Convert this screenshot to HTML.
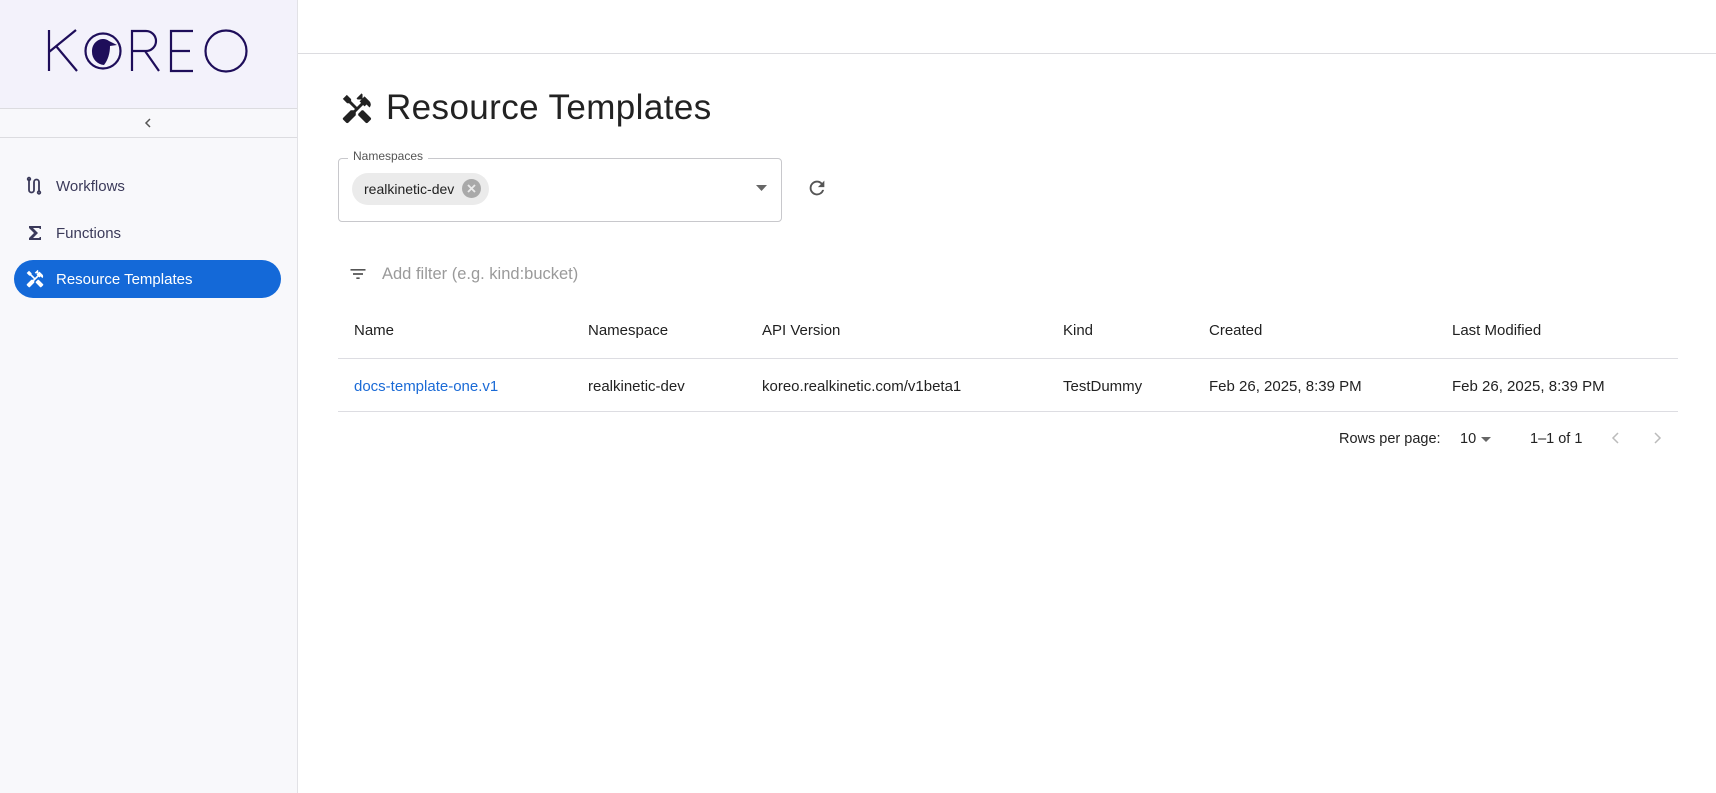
<!DOCTYPE html>
<html><head><meta charset="utf-8"><style>
*{box-sizing:border-box;margin:0;padding:0}
body{width:1716px;height:793px;overflow:hidden;font-family:"Liberation Sans",sans-serif;background:#fff;position:relative;color:#1f1f1f}
.abs{position:absolute}
#side{left:0;top:0;width:298px;height:793px;background:#f8f8fb;border-right:1px solid #e2e2e6}
#logo{left:0;top:0;width:297px;height:109px;background:#f3f2fb;border-bottom:1px solid #dcdce0}
#coll{left:0;top:109px;width:297px;height:29px;border-bottom:1px solid #dcdce0}
.nav{left:14px;width:267px;height:38px;border-radius:19px;font-size:15px;color:#3b3a5a;display:flex;align-items:center}
.nav span{position:absolute;left:42px;top:11px}
.nav svg{position:absolute;left:11px}
#hdr{left:298px;top:0;width:1418px;height:54px;border-bottom:1px solid #dcdce0}
.th,.td{position:absolute;font-size:15px}
.th{top:322px;color:#1f1f1f}
.td{top:378px;color:#222}
.line{position:absolute;left:338px;width:1340px;height:1px;background:#dddde2}
</style></head><body>
<div id="side" class="abs"></div>
<div id="logo" class="abs">
<svg class="abs" style="left:0;top:0" width="297" height="109" viewBox="0 0 297 109">
<g fill="none" stroke="#1e0e5a" stroke-width="2.2">
<path d="M49 30V71M49 52L76 30M56 46L77 71"/>
<circle cx="103" cy="51" r="17.5"/>
<path d="M132 71V31h14a10 10 0 0 1 0 20h-14M145 51l14 20"/>
<path d="M193 31h-22v40h22M171 51h19"/>
<circle cx="226" cy="51" r="20.5"/>
</g>
<path d="M92 52a11 12 0 0 1 17-11l8 4-7 1c0 7-2 14-6 19a13 13 0 0 1-12-13z" fill="#1e0e5a"/>
</svg>
</div>
<div id="coll" class="abs"><svg class="abs" style="left:142px;top:8px" width="12" height="12" viewBox="0 0 12 12"><path d="M8 2L4 6l4 4" fill="none" stroke="#555" stroke-width="1.5"/></svg></div>
<div class="nav abs" style="top:167px"><svg width="20" height="20" viewBox="0 0 20 20" fill="none" stroke="#3b3a5a" stroke-width="1.8"><path d="M4 3v11a2.5 2.5 0 0 0 5 0V6a2.5 2.5 0 0 1 5 0v9"/><circle cx="4" cy="3" r="1.3"/><circle cx="14" cy="16.5" r="1.3"/></svg><span>Workflows</span></div>
<div class="nav abs" style="top:214px"><svg width="20" height="20" viewBox="0 0 20 20"><path d="M4 3h12v3h-1.5V5H8l5 5-5 5h6.5v-1H16v3H4v-2l5-5-5-5z" fill="#3b3a5a"/></svg><span>Functions</span></div>
<div class="nav abs" style="top:260px;background:#1469d8;color:#fff"><svg width="20" height="20" viewBox="0 0 24 24"><path fill="#fff" d="m21.67 18.17-5.3-5.3h-.99l-2.54 2.54v.99l5.3 5.3c.39.39 1.02.39 1.41 0l2.12-2.12c.39-.38.39-1.02 0-1.41zM17.34 10.19l1.41-1.41 2.12 2.12a3 3 0 0 0 0-4.240l-3.54-3.54-1.41 1.41V1.71l-.7-.71-3.54 3.54.71.71h2.83l-1.41 1.41 1.06 1.06-2.89 2.89-4.13-4.13V5.06L4.83 2.04 2 4.87 5.03 7.9h1.41l4.130 4.13-.85.85H7.6l-5.3 5.3a.996.996 0 0 0 0 1.41l2.12 2.12c.39.39 1.02.39 1.41 0l5.3-5.3v-2.12l5.15-5.15 1.06 1.05z"/></svg><span>Resource Templates</span></div>
<div id="hdr" class="abs"></div>
<svg class="abs" style="left:340px;top:92px" width="34" height="34" viewBox="0 0 24 24"><path fill="#222" d="m21.67 18.17-5.3-5.3h-.99l-2.54 2.54v.99l5.3 5.3c.39.39 1.02.39 1.41 0l2.12-2.12c.39-.38.39-1.02 0-1.41zM17.34 10.19l1.41-1.41 2.12 2.12a3 3 0 0 0 0-4.24l-3.54-3.54-1.41 1.41V1.71l-.7-.71-3.54 3.54.71.71h2.83l-1.41 1.41 1.06 1.06-2.89 2.89-4.13-4.13V5.06L4.83 2.04 2 4.87 5.03 7.9h1.41l4.13 4.13-.85.85H7.6l-5.3 5.3a.996.996 0 0 0 0 1.41l2.12 2.12c.39.39 1.02.39 1.41 0l5.3-5.3v-2.12l5.15-5.15 1.06 1.05z"/></svg>
<div class="abs" style="left:386px;top:88px;font-size:35px;letter-spacing:0.4px;color:#222">Resource Templates</div>
<div class="abs" style="left:338px;top:158px;width:444px;height:64px;border:1px solid #c8c8cc;border-radius:4px"></div>
<div class="abs" style="left:348px;top:149px;padding:0 5px;background:#fff;font-size:12px;color:#555">Namespaces</div>
<div class="abs" style="left:352px;top:173px;width:137px;height:32px;border-radius:16px;background:#ebebeb;font-size:14px;color:#222;line-height:33px;padding-left:12px">realkinetic-dev
<span class="abs" style="left:110px;top:6px;width:19px;height:19px;border-radius:10px;background:#a9a9a9"></span>
<svg class="abs" style="left:114px;top:10px" width="11" height="11"><path d="M2 2l7 7M9 2l-7 7" stroke="#ebebeb" stroke-width="1.8"/></svg></div>
<svg class="abs" style="left:756px;top:185px" width="12" height="7"><path d="M0 0h11L5.5 6z" fill="#666"/></svg>
<svg class="abs" style="left:806px;top:177px" width="22" height="22" viewBox="0 0 24 24"><path fill="#555" d="M17.65 6.35A7.96 7.96 0 0 0 12 4a8 8 0 1 0 7.73 10h-2.08A6 6 0 1 1 12 6c1.66 0 3.14.69 4.22 1.78L13 11h7V4l-2.35 2.35z"/></svg>
<svg class="abs" style="left:348px;top:264px" width="20" height="20" viewBox="0 0 24 24"><path fill="#555" d="M10 18h4v-2h-4v2zM3 6v2h18V6H3zm3 7h12v-2H6v2z"/></svg>
<div class="abs" style="left:382px;top:265px;font-size:16.5px;color:#9a9a9a">Add filter (e.g. kind:bucket)</div>
<div class="th" style="left:354px">Name</div>
<div class="th" style="left:588px">Namespace</div>
<div class="th" style="left:762px">API Version</div>
<div class="th" style="left:1063px">Kind</div>
<div class="th" style="left:1209px">Created</div>
<div class="th" style="left:1452px">Last Modified</div>
<div class="line" style="top:358px"></div>
<div class="td" style="left:354px;color:#1a6ad6">docs-template-one.v1</div>
<div class="td" style="left:588px">realkinetic-dev</div>
<div class="td" style="left:762px">koreo.realkinetic.com/v1beta1</div>
<div class="td" style="left:1063px">TestDummy</div>
<div class="td" style="left:1209px">Feb 26, 2025, 8:39 PM</div>
<div class="td" style="left:1452px">Feb 26, 2025, 8:39 PM</div>
<div class="line" style="top:411px"></div>
<div class="abs" style="left:1339px;top:431px;font-size:14.5px;color:#222">Rows per page:</div>
<div class="abs" style="left:1460px;top:431px;font-size:14.5px;color:#222">10</div>
<svg class="abs" style="left:1481px;top:437px" width="11" height="6"><path d="M0 0h10L5 5z" fill="#666"/></svg>
<div class="abs" style="left:1530px;top:431px;font-size:14.5px;color:#222">1–1 of 1</div>
<svg class="abs" style="left:1610px;top:431px" width="12" height="14"><path d="M8 2L3 7l5 5" fill="none" stroke="#bbb" stroke-width="1.5"/></svg>
<svg class="abs" style="left:1651px;top:431px" width="12" height="14"><path d="M4 2l5 5-5 5" fill="none" stroke="#bbb" stroke-width="1.5"/></svg>
</body></html>
